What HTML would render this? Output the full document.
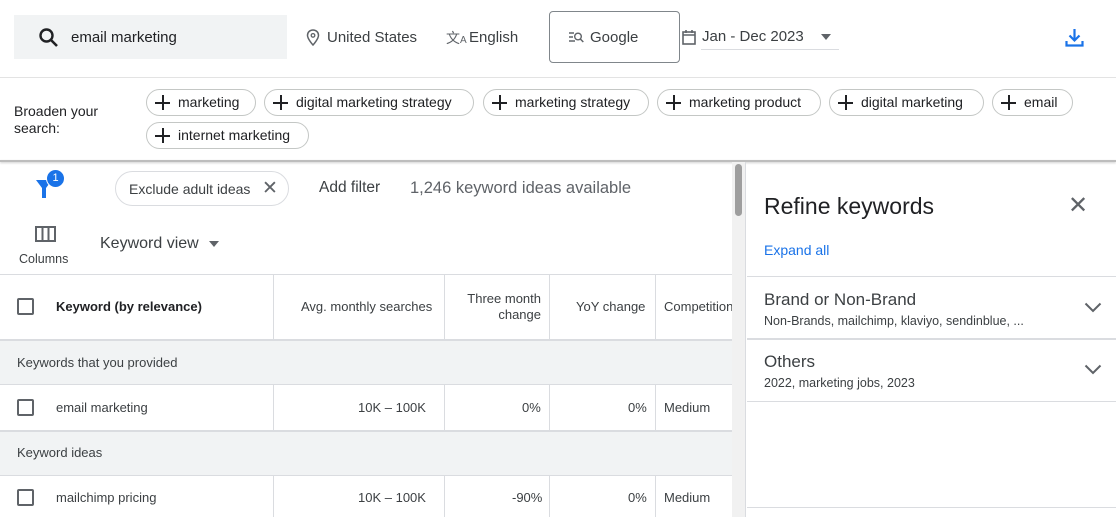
<!DOCTYPE html>
<html><head><style>
*{box-sizing:border-box;margin:0;padding:0}
body{width:1116px;height:517px;overflow:hidden;background:#fff;font-family:"Liberation Sans",Arial,sans-serif;color:#3c4043;position:relative}
.a{position:absolute}
.chip{position:absolute;height:27px;border:1px solid #c4c7c5;border-radius:14px;font-size:14px;color:#202124;line-height:25px;padding-left:31px;white-space:nowrap}
.chip:before{content:"";position:absolute;left:8px;top:5px;width:15px;height:15px;background:linear-gradient(#202124,#202124) center/15px 2px no-repeat,linear-gradient(#202124,#202124) center/2px 15px no-repeat}
.vl{position:absolute;width:1px;background:#dadce0}
.hl{position:absolute;height:1px;background:#dadce0}
.cb{position:absolute;width:17px;height:17px;border:2px solid #5f6368;border-radius:2px;left:17px}
.t{position:absolute;font-size:13px;color:#3c4043;white-space:nowrap}
</style></head><body>
<div class="a" style="left:14px;top:15px;width:273px;height:44px;background:#f1f3f4"></div>
<svg class="a" style="left:37px;top:26px" width="24" height="24" viewBox="0 0 24 24"><circle cx="9.5" cy="9.5" r="6" fill="none" stroke="#202124" stroke-width="2.4"/><path d="M14 14l6 6" stroke="#202124" stroke-width="2.6"/></svg>
<div class="t" style="left:71px;top:29px;font-size:15px;color:#202124">email marketing</div>
<svg class="a" style="left:306px;top:29px" width="14" height="17" viewBox="0 0 14 17"><path d="M7 1C3.7 1 1.5 3.4 1.5 6.4 1.5 10 7 16 7 16s5.5-6 5.5-9.6C12.5 3.4 10.3 1 7 1z" fill="none" stroke="#5f6368" stroke-width="1.5"/><circle cx="7" cy="6.4" r="1.8" fill="none" stroke="#5f6368" stroke-width="1.3"/></svg>
<div class="t" style="left:327px;top:29px;font-size:15px">United States</div>
<div class="t" style="left:446px;top:28px;font-size:14px;color:#5f6368">文<span style="font-size:10px">A</span></div>
<div class="t" style="left:469px;top:29px;font-size:15px">English</div>
<div class="a" style="left:549px;top:11px;width:131px;height:52px;border:1px solid #80868b;border-radius:4px"></div>
<svg class="a" style="left:568px;top:31px" width="16" height="12" viewBox="0 0 16 12"><path d="M1 2h5M1 6h4M1 10h6" stroke="#5f6368" stroke-width="1.4"/><circle cx="10" cy="5.5" r="3.3" fill="none" stroke="#5f6368" stroke-width="1.4"/><path d="M12.3 8l3 3" stroke="#5f6368" stroke-width="1.5"/></svg>
<div class="t" style="left:590px;top:29px;font-size:15px">Google</div>
<svg class="a" style="left:682px;top:29px" width="14" height="16" viewBox="0 0 14 16"><rect x="1" y="3" width="12" height="12" fill="none" stroke="#5f6368" stroke-width="1.6"/><path d="M1 6h12M4 1v3M10 1v3" stroke="#5f6368" stroke-width="1.6"/></svg>
<div class="t" style="left:702px;top:28px;font-size:15px">Jan - Dec 2023</div>
<div class="a" style="left:821px;top:34px;border:5px solid transparent;border-top:6px solid #5f6368"></div>
<div class="hl" style="left:701px;top:49px;width:138px"></div>
<svg class="a" style="left:1064px;top:27px" width="21" height="21" viewBox="0 0 21 21"><path d="M10.5 2v11M5.5 8.5l5 5 5-5M2.5 14v4.5h16V14" fill="none" stroke="#1a73e8" stroke-width="2.2"/></svg>
<div class="hl" style="left:0;top:77px;width:1116px;background:#e3e3e3"></div>
<div class="t" style="left:14px;top:103px;font-size:14px;color:#202124;line-height:17px">Broaden your<br>search:</div>
<div class="chip" style="left:146px;top:89px;width:110px">marketing</div>
<div class="chip" style="left:264px;top:89px;width:210px">digital marketing strategy</div>
<div class="chip" style="left:483px;top:89px;width:166px">marketing strategy</div>
<div class="chip" style="left:657px;top:89px;width:164px">marketing product</div>
<div class="chip" style="left:829px;top:89px;width:155px">digital marketing</div>
<div class="chip" style="left:992px;top:89px;width:81px">email</div>
<div class="chip" style="left:146px;top:122px;width:163px">internet marketing</div>
<div class="a" style="left:0;top:160px;width:1116px;height:2px;background:#bdbdbd;box-shadow:0 1px 2px rgba(0,0,0,.2)"></div>
<svg class="a" style="left:34px;top:176px" width="20" height="24" viewBox="0 0 20 24"><path d="M2 4h16l-6 8v10h-4v-10z" fill="#1a73e8"/></svg>
<div class="a" style="left:46px;top:169px;width:19px;height:19px;border-radius:50%;background:#1a73e8;color:#fff;font-size:11px;text-align:center;line-height:17px;border:1px solid #fff">1</div>
<div class="a" style="left:115px;top:171px;width:174px;height:35px;border:1px solid #dadce0;border-radius:18px"></div>
<div class="t" style="left:129px;top:181px;font-size:14px">Exclude adult ideas</div>
<div class="t" style="left:262px;top:177px;font-size:19px;color:#5f6368">✕</div>
<div class="t" style="left:319px;top:179px;font-size:15.5px">Add filter</div>
<div class="t" style="left:410px;top:179px;font-size:16.5px;color:#5f6368">1,246 keyword ideas available</div>
<svg class="a" style="left:35px;top:226px" width="21" height="16" viewBox="0 0 21 16"><rect x="1" y="1" width="19" height="14" fill="none" stroke="#5f6368" stroke-width="2"/><path d="M7.5 1v14M13.5 1v14" stroke="#5f6368" stroke-width="2"/></svg>
<div class="t" style="left:19px;top:252px;font-size:12.5px;color:#3c4043">Columns</div>
<div class="t" style="left:100px;top:235px;font-size:16px">Keyword view</div>
<div class="a" style="left:209px;top:241px;border:5px solid transparent;border-top:6px solid #5f6368"></div>
<div class="a" style="left:732px;top:162px;width:14px;height:355px;background:#f1f1f1;border-right:1px solid #dadce0"></div>
<div class="a" style="left:735px;top:164px;width:7px;height:52px;background:#9e9e9e;border-radius:4px"></div>
<div class="hl" style="left:0;top:274px;width:732px"></div>
<div class="a" style="left:0;top:339px;width:732px;height:46px;background:#f1f3f4;border-top:2px solid #dadce0;border-bottom:1px solid #dadce0"></div>
<div class="a" style="left:0;top:430px;width:732px;height:46px;background:#f1f3f4;border-top:2px solid #dadce0;border-bottom:1px solid #dadce0"></div>
<div class="vl" style="left:273px;top:275px;height:64px"></div><div class="vl" style="left:444px;top:275px;height:64px"></div><div class="vl" style="left:549px;top:275px;height:64px"></div><div class="vl" style="left:655px;top:275px;height:64px"></div>
<div class="vl" style="left:273px;top:385px;height:45px"></div><div class="vl" style="left:444px;top:385px;height:45px"></div><div class="vl" style="left:549px;top:385px;height:45px"></div><div class="vl" style="left:655px;top:385px;height:45px"></div>
<div class="vl" style="left:273px;top:476px;height:41px"></div><div class="vl" style="left:444px;top:476px;height:41px"></div><div class="vl" style="left:549px;top:476px;height:41px"></div><div class="vl" style="left:655px;top:476px;height:41px"></div>
<div class="cb" style="top:298px"></div>
<div class="t" style="left:56px;top:299px;font-weight:bold;color:#202124">Keyword (by relevance)</div>
<div class="t" style="left:301px;top:299px">Avg. monthly searches</div>
<div class="t" style="left:462px;top:291px;text-align:right;width:79px;line-height:16px">Three month<br>change</div>
<div class="t" style="left:576px;top:299px">YoY change</div>
<div class="t" style="left:664px;top:299px;width:68px;overflow:hidden">Competition</div>
<div class="t" style="left:17px;top:355px">Keywords that you provided</div>
<div class="cb" style="top:399px"></div>
<div class="t" style="left:56px;top:400px">email marketing</div>
<div class="t" style="left:358px;top:400px">10K – 100K</div>
<div class="t" style="left:522px;top:400px">0%</div>
<div class="t" style="left:628px;top:400px">0%</div>
<div class="t" style="left:664px;top:400px">Medium</div>
<div class="t" style="left:17px;top:445px">Keyword ideas</div>
<div class="cb" style="top:489px"></div>
<div class="t" style="left:56px;top:490px">mailchimp pricing</div>
<div class="t" style="left:358px;top:490px">10K – 100K</div>
<div class="t" style="left:512px;top:490px">-90%</div>
<div class="t" style="left:628px;top:490px">0%</div>
<div class="t" style="left:664px;top:490px">Medium</div>
<div class="t" style="left:764px;top:193px;font-size:23px;color:#202124">Refine keywords</div>
<div class="t" style="left:1068px;top:191px;font-size:24px;color:#5f6368">✕</div>
<div class="t" style="left:764px;top:242px;font-size:14px;color:#1a73e8">Expand all</div>
<div class="hl" style="left:747px;top:276px;width:369px"></div>
<div class="t" style="left:764px;top:290px;font-size:17px;color:#3c4043">Brand or Non-Brand</div>
<div class="t" style="left:764px;top:314px;font-size:12.5px">Non-Brands, mailchimp, klaviyo, sendinblue, ...</div>
<svg class="a" style="left:1084px;top:302px" width="18" height="11" viewBox="0 0 18 11"><path d="M1.5 1.5l7.5 7.5 7.5-7.5" fill="none" stroke="#5f6368" stroke-width="2"/></svg>
<div class="hl" style="left:747px;top:338px;width:369px;height:2px"></div>
<div class="t" style="left:764px;top:352px;font-size:17px">Others</div>
<div class="t" style="left:764px;top:376px;font-size:12.5px">2022, marketing jobs, 2023</div>
<svg class="a" style="left:1084px;top:364px" width="18" height="11" viewBox="0 0 18 11"><path d="M1.5 1.5l7.5 7.5 7.5-7.5" fill="none" stroke="#5f6368" stroke-width="2"/></svg>
<div class="hl" style="left:747px;top:401px;width:369px"></div>
<div class="hl" style="left:747px;top:507px;width:369px"></div>
</body></html>
